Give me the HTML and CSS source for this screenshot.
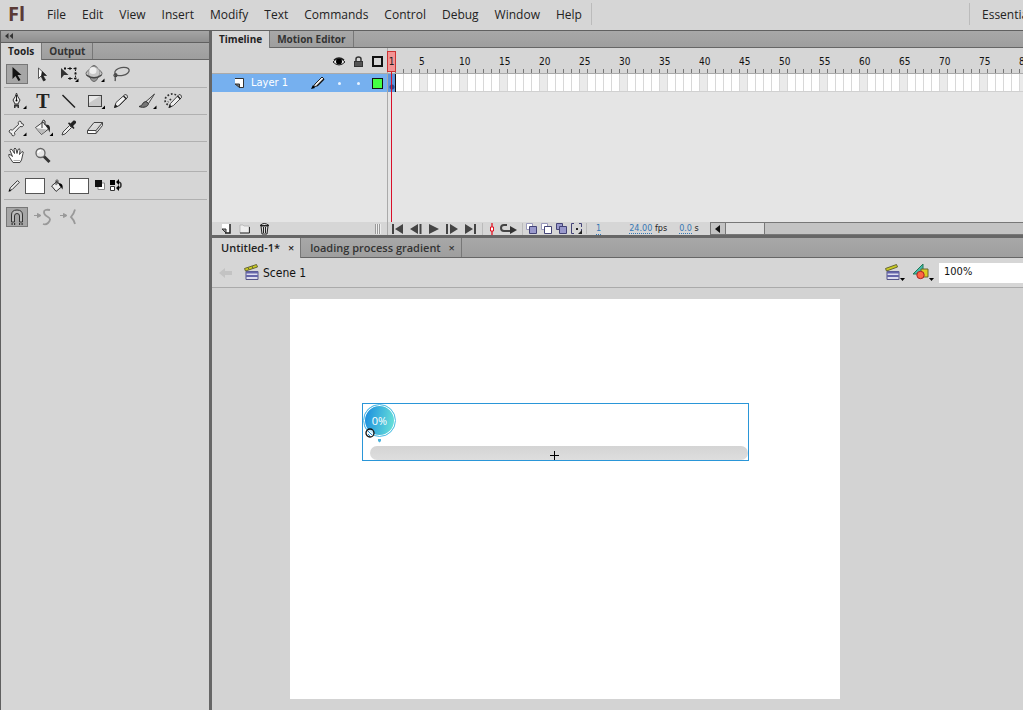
FILE: index.html
```html
<!DOCTYPE html>
<html lang="en">
<head>
  <meta charset="UTF-8">
  <meta name="viewport" content="width=device-width, initial-scale=1">
  <title>Untitled-1*</title>
  <link rel="stylesheet" href="styles.css">
</head>
<body>

  <header class="menubar">
    <span class="logo">Fl</span>
    <nav class="menu">
      <button>File</button>
      <button>Edit</button>
      <button>View</button>
      <button>Insert</button>
      <button>Modify</button>
      <button>Text</button>
      <button>Commands</button>
      <button>Control</button>
      <button>Debug</button>
      <button>Window</button>
      <button>Help</button>
    </nav>
    <button class="workspace-switch">Essentials</button>
  </header>

  <div class="workspace">

    <!-- Tools panel -->
    <aside class="tools-panel">
      <div class="collapse">
        <button aria-label="Collapse"><svg width="8" height="7" viewBox="0 0 8 7"><path d="M3.500 0v6L0 3zM8 0v6L4.500 3z" fill="#333"/></svg></button>
      </div>
      <div class="tabs">
        <button class="tab active">Tools</button>
        <button class="tab">Output</button>
      </div>

      <div class="tool-row">
        <button class="tool selected" aria-label="Selection"><svg viewBox="0 0 20 20"><path d="M5.500 3v12l3-3 3 5 2-1-3-5h4z" fill="#111"/></svg></button>
        <button class="tool" aria-label="Subselection"><svg viewBox="0 0 20 20"><path d="M5.500 4v10.500l2.500-2.500 2.500 5 2-1-2.500-4.500h3.500z" fill="#fff" stroke="#333" stroke-width=".8"/><path d="M8 12l2.500 5 2-1-2.500-4.500h3.500L9 7z" fill="#222"/></svg></button>
        <button class="tool" aria-label="Free transform"><svg viewBox="0 0 20 20"><path d="M5.500 4.500h11v10h-9" fill="none" stroke="#222" stroke-dasharray="1.500 1.500"/><path d="M15.500 3.500h2v2h-2zM10 3.500h2v2h-2zM5 3.500h2v2H5zM15.500 8.500h2v2h-2zM15.500 13.500h2v2h-2zM10 13.500h2v2h-2z" fill="#111"/><path d="M2 4v10.500l3-3.500h4.500z" fill="#333"/><path d="M19.500 14.500v3.500H16z"/></svg></button>
        <button class="tool" aria-label="3D rotation"><svg viewBox="0 0 20 20"><ellipse cx="9" cy="9.500" rx="8" ry="4.500" fill="#ccc" stroke="#666"/><ellipse cx="9" cy="9.500" rx="4.500" ry="8" fill="#999" stroke="#666"/><circle cx="9" cy="8.500" r="5.800" fill="#c6c6c6" stroke="#888" stroke-width=".7"/><circle cx="8" cy="6.500" r="3.500" fill="#eee"/><path d="M1.500 11q7.500 5.500 15 0" fill="none" stroke="#444" stroke-width="1.300"/><path d="M19.500 14.500v3.500H16z"/></svg></button>
        <button class="tool" aria-label="Lasso"><svg viewBox="0 0 20 20"><ellipse cx="11" cy="7.500" rx="7.300" ry="4" transform="rotate(-12 11 7.500)" fill="none" stroke="#555" stroke-width="1.300"/><path d="M6 10c-3-1-4 2-2 2.500s3-2 1-1.500c-2 1 0 3-1 6" fill="none" stroke="#444" stroke-width="1.200"/></svg></button>
      </div>

      <div class="tool-row">
        <button class="tool" aria-label="Pen"><svg viewBox="0 0 20 20"><path d="M9.500 2q1 4 3.500 7l-2 4H8l-2-4q2.500-3 3.500-7z" fill="#eee" stroke="#333"/><path d="M9.500 4v5" stroke="#222"/><circle cx="9.500" cy="9.500" r="1"/><path d="M7 13.500h5v3.500h-1.500v-1.500h-2V17H7z" fill="#333"/><path d="M19.500 14.500v3.500H16z"/></svg></button>
        <button class="tool glyph" aria-label="Text">T</button>
        <button class="tool" aria-label="Line"><svg viewBox="0 0 20 20"><path d="M3.500 4l12.500 12.500" stroke="#222" stroke-width="1.500"/></svg></button>
        <button class="tool" aria-label="Rectangle"><svg viewBox="0 0 20 20"><rect x="3.500" y="4.500" width="13" height="11" fill="#c9c9c9" stroke="#444"/><path d="M4 5h11L4 12z" fill="#e8e8e8"/><path d="M20 14.500v3.500h-3.500z"/></svg></button>
        <button class="tool" aria-label="Pencil"><svg viewBox="0 0 20 20"><path d="M3.500 16.500l1.500-5 9-8q3 0 2.500 3l-8 8z" fill="#f2f2f2" stroke="#444"/><path d="M3 17l1.300-4 2.700 2.700zM13 4.500l3 3-1 1-3-3z" fill="#222"/><path d="M8 14.500l8-8" stroke="#333"/></svg></button>
        <button class="tool" aria-label="Brush"><svg viewBox="0 0 20 20"><path d="M9 10.500l8.500-7.500-6 9.500z" fill="#ddd" stroke="#444"/><path d="M2 15.500c4 0 3-5 7-5l2.500 2c0 3-5 5-9.500 3z" fill="#777" stroke="#333"/><path d="M19.500 14.500v3.500H16z"/></svg></button>
        <button class="tool" aria-label="Deco"><svg viewBox="0 0 20 20"><path d="M13 4C9 1 2 5 2 9s4 6 7 5M8 8l-3 3" fill="none" stroke="#333" stroke-width="1.700" stroke-dasharray="1.700 1.900"/><path d="M6 16.500l1.500-4 8.500-9q3 0 2.500 3l-8 8z" fill="#eee" stroke="#444"/><path d="M5.500 17l1.200-3.500L9 15.700zM15 4.500l3 3-1 1-3-3z" fill="#222"/></svg></button>
      </div>

      <div class="tool-row">
        <button class="tool" aria-label="Bone"><svg viewBox="0 0 20 20"><path d="M2 13q1-2 3.500-1l6-5.500q-1-2.500 1-3.500 2 0 2 2.500 2.500 0 2 2-1 2-3.500 1l-5.500 6q1 2.500-1 3.500-2 0-2-2.500-2.500-.5-2.500-2.500z" fill="#eee" stroke="#444"/><path d="M19.500 14.500v3.500H16z"/></svg></button>
        <button class="tool" aria-label="Paint bucket"><svg viewBox="0 0 20 20"><path d="M2.500 9.500l7.500-5.500 5.500 7-7 5.500z" fill="#f3f3f3" stroke="#444"/><path d="M3 10l11 1.500-5.500 4.500z" fill="#bbb"/><path d="M9 10V4q1-3.500 3-1v4" fill="none" stroke="#333"/><path d="M12.500 6.500c5 0 5 3.500 4 8-1-2-1-3.500-2-4.500z" fill="#222"/><path d="M20 14.500v3.500h-3.500z"/></svg></button>
        <button class="tool" aria-label="Eyedropper"><svg viewBox="0 0 20 20"><path d="M3 17l1-3 6.500-6.500 2 2L6 16z" fill="#eee" stroke="#444"/><path d="M9 5.500l5.500 5.500 1-1-1.500-2 3-3q.5-3-2.500-2.500l-3 3-1.500-1.200z" fill="#222"/></svg></button>
        <button class="tool" aria-label="Eraser"><svg viewBox="0 0 20 20"><path d="M2.500 12.500l6.500-8h8.500l-6.500 8zM2.500 12.500v3H11l6.500-8v-3M11 12.500v3" fill="#ddd" stroke="#444"/><path d="M3 13h7.500v2H3z" fill="#fff"/></svg></button>
      </div>

      <div class="tool-row">
        <button class="tool" aria-label="Hand"><svg viewBox="0 0 20 20"><path d="M6 16.500l-4-6q-1-3 1-2l2.500 2-2.500-6q0-2 2-1l2.500 4-.500-4.500q1-2 2 0l1 4.500 1-4q2-2 2 1l-.5 4 2.500-3q2 0 1 2L14.500 14 13 16.500z" fill="#fff" stroke="#444"/><path d="M6.500 14.500H13" stroke="#aaa"/></svg></button>
        <button class="tool" aria-label="Zoom"><svg viewBox="0 0 20 20"><path d="M10.500 10l6 6" stroke="#333" stroke-width="3"/><circle cx="7.500" cy="7" r="4.500" fill="#e6e6e6" stroke="#666" stroke-width="1.300"/><path d="M5 7q0-2.500 3-2.500" stroke="#fff" fill="none" stroke-width="1.500"/></svg></button>
      </div>

      <div class="tool-row colors">
        <svg width="18" height="18" viewBox="0 0 20 20"><path d="M6 15l1-3 8-8 2 2-8 8z" fill="#eee" stroke="#222"/><path d="M5 16.500l3-1-2-2z"/></svg>
        <button class="swatch" aria-label="Stroke color"></button>
        <svg width="18" height="18" viewBox="0 0 20 20"><path d="M4 10l6-5 5 6-6 5z" fill="#eee" stroke="#222"/><path d="M9 9V4q1-2 2 0v4" fill="none" stroke="#222"/><path d="M12 7c4 0 5 3 4 7-1-2-1-3-3-4z"/></svg>
        <button class="swatch" aria-label="Fill color"></button>
        <button class="mini" aria-label="Black and white"><svg width="12" height="12" viewBox="0 0 12 12"><path d="M4 4h6.500v6.500H4z" fill="#fff" stroke="#888"/><path d="M1 1h7v7H1z" fill="#111"/></svg></button>
        <button class="mini" aria-label="Swap colors"><svg width="14" height="12" viewBox="0 0 14 12"><path d="M1 1h5v5H1z"/><path d="M1.500 7.500h4v4h-4z" fill="#fff" stroke="#333"/><path d="M9 3q3 0 3 3t-3 3" fill="none" stroke="#333" stroke-width="1.500"/><path d="M7 3l3-3v6zM7 9l3-3v6z"/></svg></button>
      </div>

      <div class="tool-row options">
        <button class="tool selected" aria-label="Snap to objects"><svg viewBox="0 0 20 20"><path d="M4.500 15V8q0-5 5.500-5t5.500 5v7h-3V9q0-2.500-2.500-2.500T7.500 9v6z" fill="#bbb" stroke="#333"/><path d="M4.500 17h1.200M7 17h1.200M12 17h1.200M14.500 17h1.200" stroke="#111" stroke-width="1.500"/></svg></button>
        <button class="tool" aria-label="Smooth"><svg viewBox="0 0 20 20"><path d="M1 8.500h5M4.500 6.500L8 8.500l-3.500 2z" fill="#999" stroke="#999"/><path d="M17 3q-6-1-6 2t4 5 0 6q-2 2-5 1" fill="none" stroke="#999" stroke-width="1.800"/></svg></button>
        <button class="tool" aria-label="Straighten"><svg viewBox="0 0 20 20"><path d="M1 8.500h5M4.500 6.500L8 8.500l-3.500 2z" fill="#999" stroke="#999"/><path d="M16 2.500q-1 4-4 7.500 3 3 4 7" fill="none" stroke="#999" stroke-width="1.800"/></svg></button>
      </div>
    </aside>

    <main class="main">

      <!-- Timeline -->
      <section class="timeline">
        <div class="tabs">
          <button class="tab active">Timeline</button>
          <button class="tab">Motion Editor</button>
        </div>
        <div class="timeline-body">
          <div class="layers">
            <div class="layers-head">
              <svg width="12" height="10" viewBox="0 0 12 10"><path d="M0 5q6-7 12 0-6 6-12 0z" fill="#eee" stroke="#222"/><circle cx="6" cy="4.500" r="3"/><path d="M1 3q5-4 10 0" stroke="#222" stroke-width="1.500" fill="none"/></svg>
              <svg width="9" height="11" viewBox="0 0 9 11"><path d="M2 5V3q0-2 2.500-2T7 3v2" fill="none" stroke="#333" stroke-width="1.500"/><path d="M0 5h9v6H0z" fill="#333"/><path d="M1 7h7M1 9h7" stroke="#777"/></svg>
              <span class="outline-box"></span>
            </div>
            <div class="layer">
              <svg class="layer-icon" width="10" height="10" viewBox="0 0 10 10"><path d="M1 1h8v8.500H5.500V6H1z" fill="#fff"/><path d="M1 6h4.500v3.500z" fill="#777" stroke="#333"/><path d="M1 .5h8.500v9H5" fill="none" stroke="#333"/></svg>
              <span class="layer-name">Layer 1</span>
              <svg class="layer-pencil" width="14" height="14" viewBox="0 0 14 14"><path d="M2 11l2-3 7-7 2 2-7 7z" fill="#eee" stroke="#222"/><path d="M0 13l4-1-2-3z"/><path d="M6 10l7-7" stroke="#111" stroke-width="1.500"/></svg>
              <span class="dot"></span>
              <span class="dot"></span>
              <span class="layer-color"></span>
            </div>
            <div class="layers-foot">
              <button aria-label="New layer"><svg width="10" height="11" viewBox="0 0 10 11"><path d="M1 1h8v9H5V6H1z" fill="#fff"/><path d="M1 6h4v4z" fill="#999" stroke="#333"/><path d="M9 1v9H4" fill="none" stroke="#222" stroke-width="1.500"/></svg></button>
              <button aria-label="New folder"><svg width="12" height="10" viewBox="0 0 12 10"><path d="M1 9V1h3l1 1h5v7z" fill="#eee" stroke="#aaa" stroke-width=".7"/><path d="M1 9h9.500V3" fill="none" stroke="#333"/></svg></button>
              <button aria-label="Delete"><svg width="11" height="13" viewBox="0 0 11 13"><path d="M2 4h7l-1 8H3z" fill="#ddd" stroke="#222"/><path d="M1 3.500q4-4 9 0z" fill="#eee" stroke="#222"/><path d="M4.500 5v6M6.500 5v6" stroke="#222"/></svg></button>
              <span class="grip"></span>
            </div>
          </div>

          <div class="frames">
            <div class="ruler">
              <span>5</span><span>10</span><span>15</span><span>20</span><span>25</span><span>30</span><span>35</span><span>40</span><span>45</span><span>50</span><span>55</span><span>60</span><span>65</span><span>70</span><span>75</span><span>80</span>
            </div>
            <div class="frame-row"><span class="keyframe"></span></div>
            <div class="playback">
              <div class="controls">
                <button aria-label="First frame"><svg width="12" height="10" viewBox="0 0 12 10"><path d="M0 0h2v10H0zM11 0v10L3 5z"/></svg></button>
                <button aria-label="Step back"><svg width="12" height="10" viewBox="0 0 12 10"><path d="M8 0v10L0 5zM9.500 0h2v10h-2z"/></svg></button>
                <button aria-label="Play"><svg width="12" height="10" viewBox="0 0 12 10"><path d="M1 0v10l10-5z"/></svg></button>
                <button aria-label="Step forward"><svg width="12" height="10" viewBox="0 0 12 10"><path d="M0 0h2v10H0zM4 0v10l8-5z"/></svg></button>
                <button aria-label="Last frame"><svg width="12" height="10" viewBox="0 0 12 10"><path d="M1 0v10l8-5zM10 0h2v10h-2z"/></svg></button>
              </div>
              <div class="onion">
                <button aria-label="Center frame"><svg width="6" height="12" viewBox="0 0 6 12"><path d="M3 0v12" stroke="#e01020" stroke-width="1.300"/><path d="M1.500 4h3v4h-3z" fill="#fff" stroke="#e01020"/></svg></button>
                <button aria-label="Loop"><svg width="17" height="10" viewBox="0 0 17 10"><path d="M7 1H4Q1 1 1 4t3 3h8" fill="none" stroke="#444" stroke-width="2"/><path d="M10 2l7 4-7 4z" fill="#333"/></svg></button>
              </div>
              <div class="skins">
                <button aria-label="Onion skin"><svg width="11" height="11" viewBox="0 0 11 11"><path d="M.5.5h6v6h-6z" fill="#fff" stroke="#99b"/><path d="M3.500 3.500h7v7h-7z" fill="#99c" stroke="#447"/></svg></button>
                <button aria-label="Onion skin outlines"><svg width="11" height="11" viewBox="0 0 11 11"><path d="M.5.5h6v6h-6z" fill="#fff" stroke="#99b"/><path d="M3.500 3.500h7v7h-7z" fill="#fff" stroke="#447"/></svg></button>
                <button aria-label="Edit multiple frames"><svg width="11" height="11" viewBox="0 0 11 11"><path d="M.5.5h6v6h-6z" fill="#99c" stroke="#447"/><path d="M3.500 3.500h7v7h-7z" fill="#99c" stroke="#447"/></svg></button>
                <button aria-label="Modify markers"><svg width="11" height="11" viewBox="0 0 11 11"><path d="M3 .5H.5v10H3M8 .5h2.500V4M10.500 6v4.500H8" fill="none" stroke="#447"/><path d="M5 5h2v2H5zM11 7v4H7z" fill="#222"/></svg></button>
              </div>
              <div class="readout">
                <a href="#" class="frame-no">1</a>
                <span class="fps"><a href="#">24.00</a> fps</span>
                <span><a href="#">0.0</a> s</span>
              </div>
              <div class="scrollbar">
                <button class="arrow" aria-label="Scroll left"><svg width="6" height="8" viewBox="0 0 6 8"><path d="M5 0v8L0 4z" fill="#111"/></svg></button>
                <span class="thumb"></span>
              </div>
            </div>
            <div class="playhead"><span>1</span></div>
          </div>
        </div>
      </section>

      <!-- Document -->
      <section class="document">
        <div class="tabs doc-tabs">
          <button class="tab active">Untitled-1* <span class="close">×</span></button>
          <button class="tab">loading process gradient <span class="close">×</span></button>
        </div>
        <div class="scene-bar">
          <svg width="14" height="12" viewBox="0 0 14 12"><path d="M0 6l6-5v3h7v4H6v3z" fill="#c3c3c3"/></svg>
          <svg class="clapper" width="16" height="17" viewBox="0 0 16 17"><path d="M2 7.500h12v8H2z" fill="#dde" stroke="#558"/><path d="M2 8.500h12M2 12h12" stroke="#66a" stroke-width="2"/><path d="M.5 4.500l12-4 1 2.500L1.500 7z" fill="#cc2" stroke="#663"/><path d="M4 3.500l1 2M8 2l1 2.500" stroke="#663"/></svg>
          <span class="scene-name">Scene 1</span>
          <button class="edit-scene" aria-label="Edit scene"><svg width="20" height="19" viewBox="0 0 20 19"><path d="M2 8.500h12v8H2z" fill="#dde" stroke="#558"/><path d="M2 9.500h12M2 13h12" stroke="#66a" stroke-width="2"/><path d="M.5 5.500l11-4 1 2.500L1.500 8z" fill="#cc2" stroke="#663"/><path d="M15 15h5l-2.500 3z"/></svg></button>
          <button class="edit-symbols" aria-label="Edit symbols"><svg width="22" height="19" viewBox="0 0 22 19"><path d="M1 11L11 1v10z" fill="#4ba" stroke="#275"/><path d="M9 6h7v8H9z" fill="#dc2" stroke="#663"/><circle cx="8.500" cy="12" r="3.700" fill="#f64" stroke="#a22"/><path d="M17 15h5l-2.500 3z"/></svg></button>
          <input class="zoom" type="text" value="100%" aria-label="Zoom level">
        </div>
        <div class="pasteboard">
          <div class="stage">
            <div class="clip">
              <div class="bar"></div>
              <div class="badge">0%</div>
              <svg class="tail" width="5" height="4" viewBox="0 0 5 4"><path d="M1 0h3v2L2.500 3.500 1 2z" fill="#4ab2dc"/></svg>
              <svg class="origin" width="10" height="10" viewBox="0 0 10 10"><circle cx="5" cy="5" r="4" fill="#fff" fill-opacity=".7" stroke="#111" stroke-width="1.300"/><path d="M3 3l4 4M3 6l2 2" stroke="#28c"/></svg>
              <svg class="cross" width="9" height="9" viewBox="0 0 9 9"><path d="M4.500 0v9M0 4.500h9" stroke="#000"/></svg>
            </div>
          </div>
        </div>
      </section>
    </main>
  </div>

</body>
</html>
```
FILE: styles.css
```css
* {
  box-sizing: border-box;
}

body {
  display: flex;
  flex-direction: column;
  height: 100vh;
  margin: 0;
  overflow: hidden;
  background: #d6d6d6;
  color: #222;
  font-family: "Open Sans", "Noto Sans", sans-serif;
  font-size: 12px;
}

button {
  margin: 0;
  padding: 0;
  border: 0;
  background: none;
  color: inherit;
  font: inherit;
  white-space: nowrap;
}

svg {
  display: block;
  flex: none;
}

/* menu bar */
.menubar {
  display: flex;
  align-items: center;
  flex: none;
  height: 30px;
  padding-bottom: 2px;
}

.logo {
  width: 38px;
  padding-left: 8px;
  color: #5a3a36;
  font-size: 20px;
  font-weight: 700;
  line-height: 26px;
}

.menu {
  display: flex;
  align-items: center;
  height: 22px;
  padding: 0 9px;
  gap: 16px;
  border-right: 1px solid #bbb;
}

.workspace-switch {
  width: 54px;
  height: 22px;
  margin-left: auto;
  padding-left: 12px;
  border-left: 1px solid #bbb;
  overflow: hidden;
  text-align: left;
}

.workspace {
  display: flex;
  flex: 1;
  min-height: 0;
  border-top: 1px solid #606060;
}

/* tabs */
.tabs {
  display: flex;
  flex: none;
  height: 17px;
  background: linear-gradient(#a8a8a8, #9e9e9e);
  border-bottom: 1px solid #666;
}

.tab {
  padding: 0 7px;
  border-right: 1px solid #777;
  color: #333;
  font-size: 10px;
  font-weight: 700;
  line-height: 17px;
}

.tab.active {
  height: 17px;
  background: #d6d6d6;
  color: #222;
}

/* tools panel */
.tools-panel {
  flex: none;
  width: 212px;
  border-left: 1px solid #606060;
  border-right: 3px solid #666;
}

.collapse {
  height: 12px;
  padding: 2px 4px;
  background: linear-gradient(#a5a5a5, #8f8f8f);
  border-bottom: 1px solid #606060;
}

.collapse button {
  display: block;
}

.tool-row {
  display: flex;
  align-items: center;
  height: 27px;
  margin: 0 2px 0 3px;
  border-bottom: 1px solid #b0b0b0;
}

.tools-panel .tabs + .tool-row {
  height: 28px;
}

.tool {
  display: flex;
  align-items: center;
  justify-content: center;
  width: 22px;
  height: 20px;
  margin: 0 2px;
}

.tool svg {
  width: 20px;
  height: 20px;
}

.tool.selected {
  border: 1px solid #777;
  background: #a6a6a6;
}

.tool.glyph {
  font-family: "Liberation Serif", serif;
  font-size: 20px;
  font-weight: bold;
  line-height: 20px;
}

.tool-row.colors {
  height: 28px;
}

.tools-panel .tool-row:nth-child(6) {
  height: 30px;
  padding-bottom: 2px;
}

.swatch {
  width: 20px;
  height: 16px;
  margin: 0 3px;
  border: 1px solid #555;
  background: #fff;
}

.mini {
  margin: 0 1px 2px 2px;
}

.tool-row.options {
  height: 34px;
  border-bottom: 0;
}

/* timeline */
.main {
  display: flex;
  flex: 1;
  flex-direction: column;
  min-width: 0;
}

.timeline-body {
  display: flex;
  height: 187px;
  background: #e5e5e5;
}

.layers,
.frames {
  display: flex;
  flex-direction: column;
}

.layers {
  flex: none;
  width: 176px;
  border-right: 1px solid #aaa;
}

.layers-head,
.ruler {
  flex: none;
  height: 26px;
  background: #d6d6d6;
  border-bottom: 1px solid #aaa;
}

.layers-head {
  display: flex;
  align-items: center;
  justify-content: flex-end;
  gap: 9px;
  padding: 2px 4px 0 0;
}

.outline-box,
.layer-color {
  width: 11px;
  height: 11px;
  border: 2px solid #111;
}

.layer {
  display: flex;
  align-items: center;
  height: 18px;
  padding: 0 4px 0 22px;
  background: #76b0ef;
}

.layer-name {
  flex: 1;
  padding-left: 7px;
  color: #fff;
  font-family: "DejaVu Sans Condensed", "DejaVu Sans", sans-serif;
  font-size: 11px;
  line-height: 14px;
}

.dot {
  width: 3px;
  height: 3px;
  margin-left: 13px;
  border-radius: 2px;
  background: #e8f3ff;
}

.dot + .dot {
  margin-left: 16px;
}

.layer-color {
  margin-left: 12px;
  border-width: 1px;
  background: #4f4;
}

.layers-foot,
.playback {
  display: flex;
  align-items: center;
  height: 13px;
  margin-top: auto;
  background: #d6d6d6;
}

.layers-foot {
  gap: 8px;
  padding: 0 6px 0 9px;
}

.grip {
  width: 6px;
  height: 10px;
  margin-left: auto;
  background: repeating-linear-gradient(90deg, #999 0 1px, #eee 1px 2px);
}

.frames {
  position: relative;
  flex: 1;
  min-width: 0;
}

.ruler {
  display: flex;
  padding-left: 31px;
  overflow: hidden;
  background: repeating-linear-gradient(90deg, transparent 0 7px, #777 7px 8px) 0 100% / 100% 4px no-repeat #d6d6d6;
}

.ruler span {
  flex: none;
  width: 40px;
  color: #111;
  font-family: "DejaVu Sans Condensed", "DejaVu Sans", sans-serif;
  font-size: 10px;
  line-height: 28px;
}

.frame-row {
  height: 18px;
  border-bottom: 1px solid #d0d0d0;
  background:
    repeating-linear-gradient(90deg, transparent 0 7px, #d8d8d8 7px 8px),
    repeating-linear-gradient(90deg, #fff 0 32px, #eaeaea 32px 40px);
}

.keyframe {
  display: block;
  width: 8px;
  height: 18px;
  border-right: 1px solid #111;
  background: radial-gradient(circle at 4px 13px, #2b4a8c 0 2px, #5b93dc 3px);
}

.playhead {
  position: absolute;
  top: 3px;
  bottom: 13px;
  left: -1px;
  width: 9px;
}

.playhead::before {
  content: "";
  position: absolute;
  top: 21px;
  bottom: 0;
  left: 4px;
  width: 1px;
  background: #d8102a;
}

.playhead span {
  display: block;
  height: 21px;
  border: 1px solid #c33;
  background: rgba(255, 120, 120, 0.7);
  color: #222;
  font-family: "DejaVu Sans Condensed", "DejaVu Sans", sans-serif;
  font-size: 10px;
  line-height: 20px;
  text-align: center;
}

.playback svg {
  fill: #444;
}

.controls,
.onion,
.skins {
  display: flex;
  align-items: center;
}

.controls {
  gap: 6px;
  padding: 0 6px 0 4px;
}

.onion {
  gap: 5px;
  padding: 0 5px 0 6px;
  border-left: 1px solid #bbb;
  border-right: 1px solid #bbb;
}

.skins {
  gap: 4px;
  padding: 0 4px 0 3px;
  border-right: 1px solid #bbb;
}

.readout {
  display: flex;
  flex: none;
  padding-left: 9px;
  width: 123px;
  font-family: "DejaVu Sans Condensed", "DejaVu Sans", sans-serif;
  font-size: 9px;
  line-height: 12px;
  white-space: nowrap;
}

.readout a {
  border-bottom: 1px dotted #3678b5;
  color: #3678b5;
  text-decoration: none;
}

.frame-no {
  margin-right: 28px;
}

.fps {
  margin-right: 12px;
}

.scrollbar {
  display: flex;
  flex: 1;
  height: 13px;
  border: 1px solid #777;
  border-right: 0;
  background: #c3c3c3;
}

.arrow {
  display: flex;
  align-items: center;
  justify-content: center;
  width: 15px;
  border-right: 1px solid #777;
}

.thumb {
  width: 39px;
  border-right: 1px solid #777;
  background: #ddd;
}

/* document */
.document {
  display: flex;
  flex: 1;
  flex-direction: column;
  border-top: 3px solid #666;
}

.doc-tabs {
  height: 20px;
}

.doc-tabs .tab {
  padding: 0 6px 0 9px;
  font-size: 11px;
  font-weight: 600;
  line-height: 18px;
}

.doc-tabs .tab.active {
  height: 20px;
}

.close {
  padding-left: 5px;
}

.scene-bar {
  display: flex;
  align-items: center;
  flex: none;
  height: 30px;
  padding-left: 7px;
  border-bottom: 1px solid #aaa;
}

.clapper {
  margin-left: 11px;
}

.scene-name {
  padding-left: 3px;
  color: #111;
  font-family: "DejaVu Sans Condensed", "DejaVu Sans", sans-serif;
  font-size: 12px;
}

.edit-scene {
  margin-left: auto;
}

.edit-symbols {
  margin: 0 5px 0 7px;
}

.zoom {
  width: 84px;
  height: 20px;
  padding: 0 5px 2px;
  border: 0;
  background: #fff;
  color: #111;
  font-family: "DejaVu Sans Condensed", "DejaVu Sans", sans-serif;
  font-size: 11px;
}

.pasteboard {
  flex: 1;
  padding: 11px 78px;
  background: #d3d3d3;
}

.stage {
  position: relative;
  width: 550px;
  height: 400px;
  background: #fff;
}

.clip {
  position: absolute;
  top: 104px;
  left: 72px;
  width: 387px;
  height: 58px;
  border: 1px solid #2a96d8;
}

.bar {
  position: absolute;
  right: 0;
  bottom: 0;
  left: 7px;
  height: 14px;
  border-radius: 7px;
  background: linear-gradient(#d4d4d4, #dedede);
}

.badge {
  position: absolute;
  top: 0;
  left: 0;
  width: 33px;
  height: 33px;
  border: 1px solid #55bfe8;
  border-radius: 50%;
  background: linear-gradient(100deg, #1688e0, #6ee8d8);
  box-shadow: inset 0 0 0 1px #fff;
  color: #fff;
  font-size: 11px;
  line-height: 32px;
  text-align: center;
}

.tail {
  position: absolute;
  top: 35px;
  left: 14px;
}

.origin {
  position: absolute;
  top: 24px;
  left: 2px;
}

.cross {
  position: absolute;
  top: 47px;
  left: 187px;
}
```
